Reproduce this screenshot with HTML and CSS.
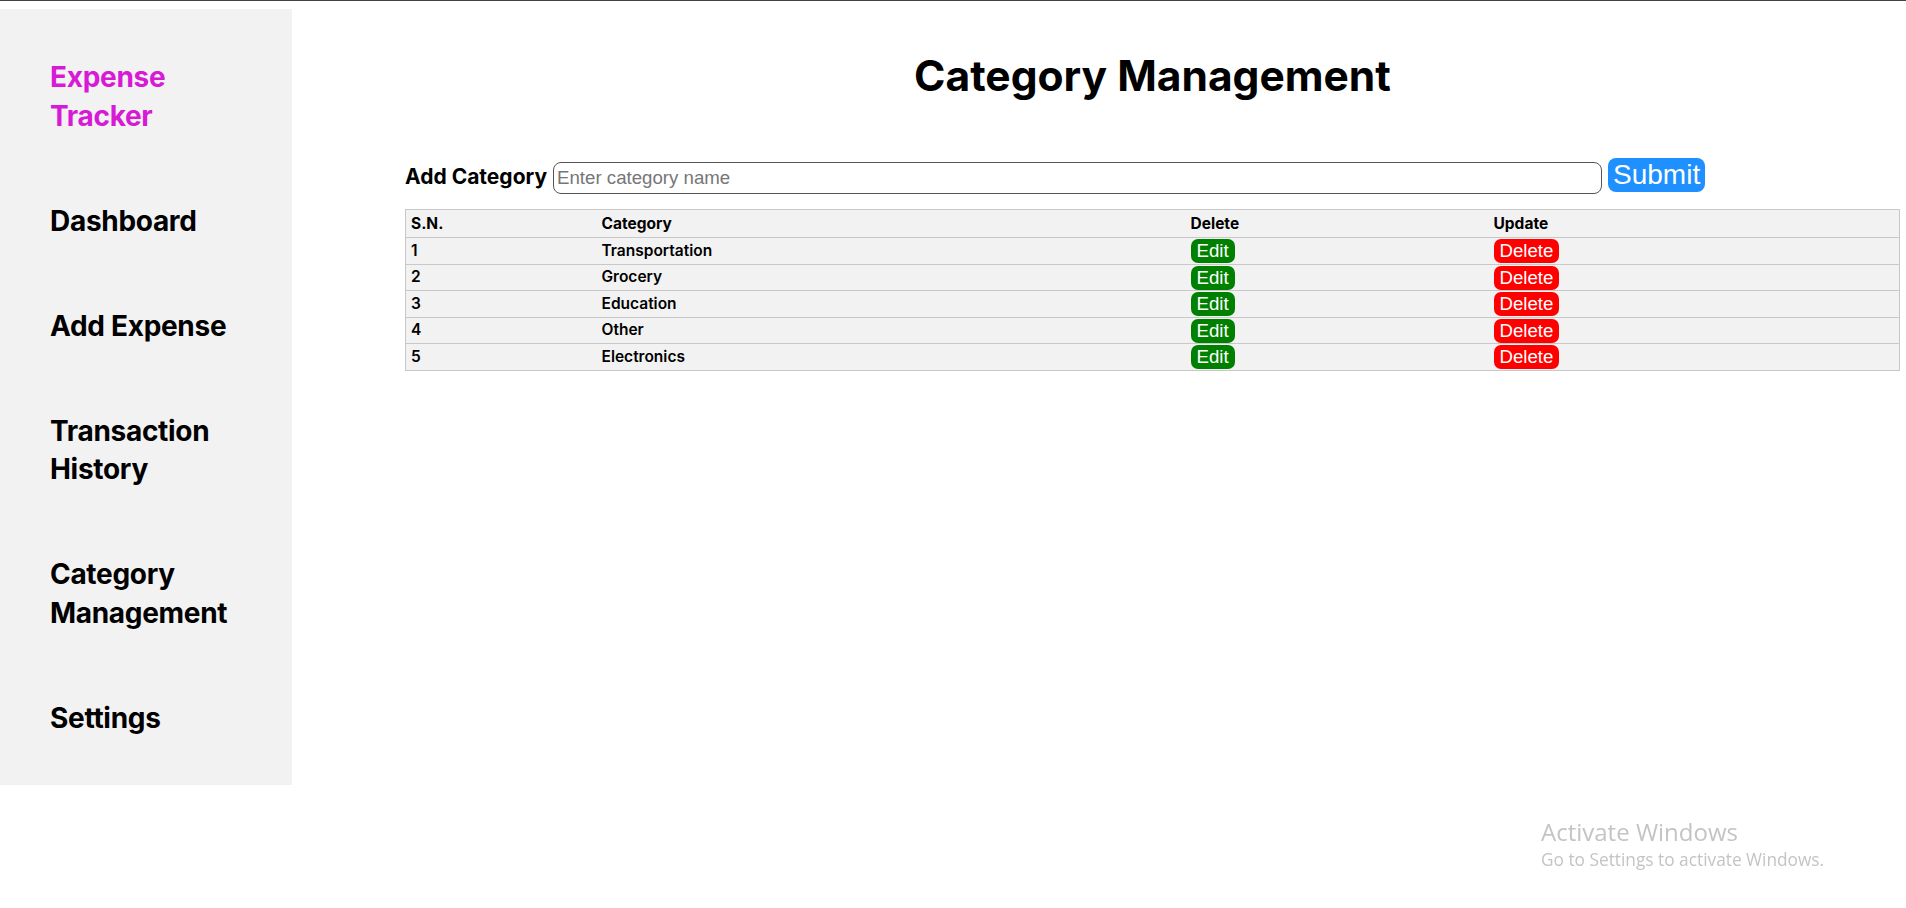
FILE: index.html
```html
<!DOCTYPE html>
<html lang="en">
<head>
<meta charset="utf-8">
<title>Category Management</title>
<link rel="stylesheet" href="styles.css">
</head>
<body>
<div class="app">
  <aside class="sidebar">
    <nav class="nav">
      <a class="nav-item brand" href="#">Expense<br>Tracker</a>
      <a class="nav-item" href="#">Dashboard</a>
      <a class="nav-item" href="#">Add Expense</a>
      <a class="nav-item" href="#">Transaction<br>History</a>
      <a class="nav-item" href="#">Category<br>Management</a>
      <a class="nav-item" href="#">Settings</a>
    </nav>
  </aside>
  <main class="main">
    <h1 class="title">Category Management</h1>
    <form class="add-form">
      <label class="add-label" for="cat">Add Category</label>
      <input class="add-input" id="cat" type="text" placeholder="Enter category name">
      <button class="btn-submit" type="button">Submit</button>
    </form>
    <table class="cat-table">
      <colgroup>
        <col class="c-sn">
        <col class="c-cat">
        <col class="c-del">
        <col class="c-upd">
      </colgroup>
      <thead>
        <tr>
          <th>S.N.</th>
          <th>Category</th>
          <th>Delete</th>
          <th>Update</th>
        </tr>
      </thead>
      <tbody>
        <tr><td>1</td><td>Transportation</td><td><button class="btn btn-edit">Edit</button></td><td><button class="btn btn-delete">Delete</button></td></tr>
        <tr><td>2</td><td>Grocery</td><td><button class="btn btn-edit">Edit</button></td><td><button class="btn btn-delete">Delete</button></td></tr>
        <tr><td>3</td><td>Education</td><td><button class="btn btn-edit">Edit</button></td><td><button class="btn btn-delete">Delete</button></td></tr>
        <tr><td>4</td><td>Other</td><td><button class="btn btn-edit">Edit</button></td><td><button class="btn btn-delete">Delete</button></td></tr>
        <tr><td>5</td><td>Electronics</td><td><button class="btn btn-edit">Edit</button></td><td><button class="btn btn-delete">Delete</button></td></tr>
      </tbody>
    </table>
  </main>
</div>
<div class="watermark">
  <div class="wm-title">Activate Windows</div>
  <div class="wm-sub">Go to Settings to activate Windows.</div>
</div>
</body>
</html>
```
FILE: styles.css
```css
* { box-sizing: border-box; }

html {
  border-top: 1px solid #444;
}

body {
  margin: 0;
  font-family: "Inter", "Liberation Sans", sans-serif;
  color: #000;
  background: #fff;
}

.app {
  display: flex;
  align-items: flex-start;
}

.sidebar {
  width: 292px;
  height: 776px;
  margin-top: 8px;
  background: #f2f2f2;
  padding: 49px 20px 0 50px;
  flex-shrink: 0;
}

.nav {
  display: flex;
  flex-direction: column;
  gap: 66.5px;
}

.nav-item {
  font-size: 28px;
  line-height: 38.5px;
  font-weight: 700;
  letter-spacing: -0.3px;
  color: #000;
  text-decoration: none;
  white-space: nowrap;
}

.nav-item.brand {
  color: #d61ad6;
}

.main {
  flex: 1;
  padding: 0 7px 0 113px;
}

.title {
  margin: 45px 0 0;
  text-align: center;
  font-size: 42.5px;
  line-height: 60px;
  font-weight: 700;
}

.add-form {
  display: flex;
  align-items: baseline;
  gap: 6px;
  margin-top: 52px;
}

.add-label {
  font-size: 21px;
  font-weight: 700;
}

.add-input {
  width: 1049px;
  height: 32px;
  border: 1px solid #555;
  border-radius: 8px;
  padding: 0 3px;
  font-family: "Liberation Sans", Arial, sans-serif;
  font-size: 18.67px;
  color: #000;
  background: #fff;
}

.add-input::placeholder {
  color: #767676;
}

.btn-submit {
  height: 34px;
  padding: 0 5px;
  border: none;
  border-radius: 8px;
  background: #1e90ff;
  color: #fff;
  font-family: "Liberation Sans", Arial, sans-serif;
  font-size: 28px;
  line-height: 34px;
}

.cat-table {
  width: 1494px;
  margin-top: 15px;
  table-layout: fixed;
  border-collapse: collapse;
  background: #f2f2f2;
  border: 1px solid #c8c8c8;
}

.c-sn { width: 191px; }
.c-cat { width: 589px; }
.c-del { width: 303px; }
.c-upd { width: 411px; }

.cat-table th,
.cat-table td {
  text-align: left;
  padding: 0 5px;
  border-bottom: 1px solid #c8c8c8;
  font-size: 15.5px;
  line-height: 24px;
  vertical-align: middle;
}

.cat-table th {
  font-weight: 700;
}

.cat-table td {
  font-weight: 600;
}

.cat-table thead tr { height: 28px; }
.cat-table tbody tr { height: 26.5px; }

.btn {
  display: inline-block;
  height: 24px;
  padding: 0 6px;
  border: none;
  border-radius: 7px;
  color: #fff;
  font-family: "Liberation Sans", Arial, sans-serif;
  font-size: 18.67px;
  line-height: 24px;
  vertical-align: middle;
}

.btn-edit { background: #008000; }
.btn-delete { background: #ff0000; }

.watermark {
  position: fixed;
  left: 1541px;
  top: 816px;
  color: #c4c4c4;
  font-family: "Open Sans", "Noto Sans", sans-serif;
}

.wm-title {
  font-size: 24px;
  line-height: 31px;
}

.wm-sub {
  font-size: 17.3px;
  line-height: 25px;
}
```
